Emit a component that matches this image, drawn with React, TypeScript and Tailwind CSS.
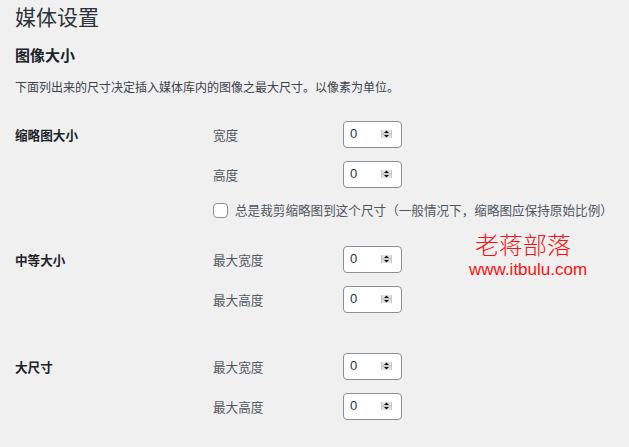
import React from 'react';

const font = { fontFamily: '"Noto Sans CJK SC", "Noto Sans", sans-serif' };

function Spinner() {
  return (
    <svg width="11" height="8" viewBox="0 0 11 8" className="shrink-0">
      <rect x="0" y="0" width="11" height="8" fill="#e3e3e3" />
      <rect x="0" y="0" width="1" height="8" fill="#c8c8c8" />
      <rect x="10" y="0" width="1" height="8" fill="#c8c8c8" />
      <rect x="1" y="3.5" width="9" height="1" fill="#b5b5b5" />
      <path d="M5.5 0.6 L8 3 L3 3 Z" fill="#111" />
      <path d="M5.5 7.4 L8 5 L3 5 Z" fill="#111" />
    </svg>
  );
}

function NumberBox() {
  return (
    <div className="flex h-[27px] w-[59px] items-center justify-between rounded-[4px] border border-[#8c8f94] bg-white pl-[6px] pr-[9px]">
      <span className="text-[13px] text-[#2c3338]" style={{ fontFamily: '"Liberation Sans", sans-serif' }}>
        0
      </span>
      <Spinner />
    </div>
  );
}

function Row({ label }: { label: string }) {
  return (
    <div className="flex h-[40px] items-center">
      <span className="w-[130px] pt-[2px] text-[12.6px] text-[#50575e]">{label}</span>
      <NumberBox />
    </div>
  );
}

function Section({
  title,
  rows,
  children,
  className = '',
}: {
  title: string;
  rows: string[];
  children?: React.ReactNode;
  className?: string;
}) {
  return (
    <div className={`flex ${className}`}>
      <div className="flex h-[40px] w-[198px] shrink-0 items-center pt-[3px] text-[12.6px] font-bold text-[#1d2327]">
        {title}
      </div>
      <div className="flex flex-col">
        {rows.map((r) => (
          <Row key={r} label={r} />
        ))}
        {children}
      </div>
    </div>
  );
}

export default function App() {
  return (
    <div className="relative h-[447px] w-full overflow-hidden bg-[#f0f0f1] px-[15px]" style={font}>
      <h1 className="text-[21px] leading-[32px] text-[#2c3338]">媒体设置</h1>
      <h2 className="mt-[13px] text-[15px] font-bold leading-[20px] text-[#1d2327]">图像大小</h2>
      <p className="mt-[12px] text-[12px] leading-[20px] text-[#3c434a]">
        下面列出来的尺寸决定插入媒体库内的图像之最大尺寸。以像素为单位。
      </p>

      <Section title="缩略图大小" rows={['宽度', '高度']} className="mt-[17px]">
        <div className="flex h-[32px] items-center gap-[7px]">
          <span className="h-[15px] w-[15px] rounded-[4px] border border-[#8c8f94] bg-white" />
          <span className="text-[12.6px] text-[#50575e]">
            总是裁剪缩略图到这个尺寸（一般情况下，缩略图应保持原始比例）
          </span>
        </div>
      </Section>

      <Section title="中等大小" rows={['最大宽度', '最大高度']} className="mt-[13px]" />
      <Section title="大尺寸" rows={['最大宽度', '最大高度']} className="mt-[27px]" />

      <div className="absolute left-[475px] top-[228px] flex flex-col items-start text-[#ff1010]">
        <span className="text-[24px] font-light leading-[32px]">老蒋部落</span>
        <span
          className="-ml-[6px] text-[17px] leading-[20px]"
          style={{ fontFamily: '"Liberation Sans", sans-serif' }}
        >
          www.itbulu.com
        </span>
      </div>
    </div>
  );
}
